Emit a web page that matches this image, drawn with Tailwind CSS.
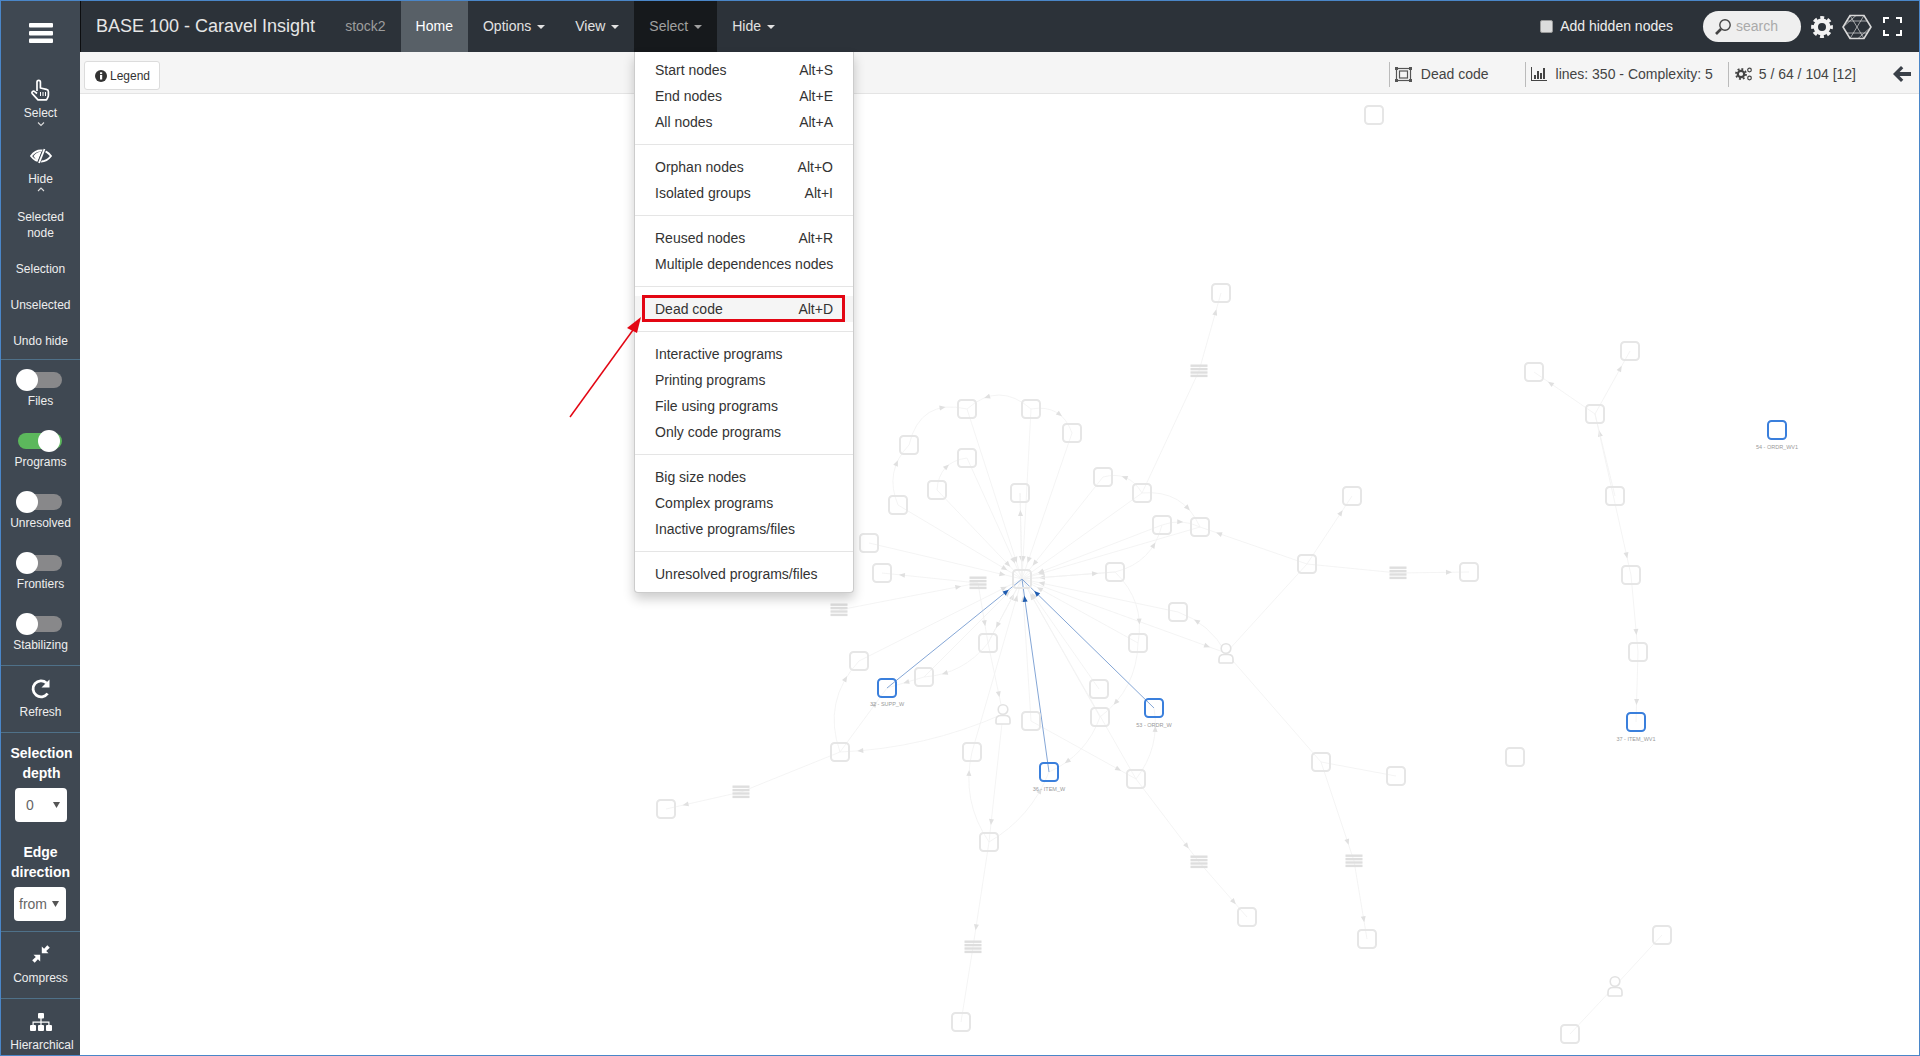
<!DOCTYPE html>
<html>
<head>
<meta charset="utf-8" />
<title>BASE 100 - Caravel Insight</title>
<script src="https://cdn.jsdelivr.net/npm/@tailwindcss/browser@4"></script>
</head>
<body class="relative w-[1920px] h-[1056px] overflow-hidden bg-white font-['Liberation_Sans',Arial,sans-serif] text-[14px] text-[#333]">
<div class="w-full h-full border border-[#4a86c8] flex">

  <!-- sidebar -->
  <div class="w-[79px] h-full shrink-0 bg-[#3f4852] text-[#eee] text-[12px] leading-[16px] text-center overflow-hidden">
    <div class="h-[64px] pt-[22px] flex justify-center">
      <svg width="24" height="20" viewBox="0 0 24 20" fill="#fff"><rect y="0" width="24" height="4.5" rx="1"/><rect y="8" width="24" height="4.5" rx="1"/><rect y="15.500" width="24" height="4.5" rx="1"/></svg>
    </div>
    <div class="mt-[14px] pl-[28px]">
      <svg width="22" height="22" viewBox="0 0 22 22" fill="none" stroke="#fff" stroke-width="1.700" stroke-linejoin="round"><path d="M8 12V3a1.700 1.700 0 0 1 3.400 0V9l6 1.300c1.300.3 2 1.100 2 2.400V16c0 1-.3 2-.8 2.800L17.500 20.800H9L3.300 14.600c-1.300-1.500.9-3.300 2.400-2L8 14.500"/><path d="M11.500 13v4M14 13v4M16.500 13v4" stroke-width="1"/></svg>
    </div>
    <div class="mt-[4px]">Select</div>
    <div class="h-[6px] flex justify-center"><svg width="8" height="6" viewBox="0 0 8 6" fill="none" stroke="#ddd" stroke-width="1.100"><path d="M1 1.500l3 3 3-3"/></svg></div>

    <div class="mt-[21px] flex justify-center">
      <svg width="22" height="16" viewBox="0 0 22 16"><path d="M1 8C4 4 7 2.500 11 2.500S18 4 21 8c-3 4-6 5.500-10 5.500S4 12 1 8z" fill="none" stroke="#fff" stroke-width="1.800"/><path d="M3.500 8C6 5 8 4 11.500 3.500L8 13C6 12 5 10 3.500 8z" fill="#fff"/><path d="M15 .5L8.500 15.500" stroke="#3f4852" stroke-width="3.400"/><path d="M14.500 1L9 15" stroke="#fff" stroke-width="1.800"/></svg>
    </div>
    <div class="mt-[7px]">Hide</div>
    <div class="h-[5px] flex justify-center"><svg width="8" height="5" viewBox="0 0 8 5" fill="none" stroke="#ddd" stroke-width="1.100"><path d="M1 4l3-3 3 3"/></svg></div>

    <div class="mt-[17px]">Selected<br>node</div>
    <div class="mt-[20px]">Selection</div>
    <div class="mt-[20px]">Unselected</div>
    <div class="mt-[20px]">Undo hide</div>
    <div class="mt-[10px] border-t border-[#4f7189]"></div>

    <div class="mt-[9px] pl-[15px]"><div class="relative w-[46px] h-[22px]"><div class="absolute left-[2px] right-0 top-[3px] h-[16px] rounded-full bg-[#88888a]"></div><div class="absolute left-0 top-0 w-[22px] h-[22px] rounded-full bg-white"></div></div></div>
    <div class="mt-[2px]">Files</div>
    <div class="mt-[21px] pl-[15px]"><div class="relative w-[46px] h-[22px]"><div class="absolute left-[2px] right-0 top-[3px] h-[16px] rounded-full bg-[#5cb85c]"></div><div class="absolute left-[22px] top-0 w-[22px] h-[22px] rounded-full bg-white"></div></div></div>
    <div class="mt-[2px]">Programs</div>
    <div class="mt-[21px] pl-[15px]"><div class="relative w-[46px] h-[22px]"><div class="absolute left-[2px] right-0 top-[3px] h-[16px] rounded-full bg-[#88888a]"></div><div class="absolute left-0 top-0 w-[22px] h-[22px] rounded-full bg-white"></div></div></div>
    <div class="mt-[2px]">Unresolved</div>
    <div class="mt-[21px] pl-[15px]"><div class="relative w-[46px] h-[22px]"><div class="absolute left-[2px] right-0 top-[3px] h-[16px] rounded-full bg-[#88888a]"></div><div class="absolute left-0 top-0 w-[22px] h-[22px] rounded-full bg-white"></div></div></div>
    <div class="mt-[2px]">Frontiers</div>
    <div class="mt-[21px] pl-[15px]"><div class="relative w-[46px] h-[22px]"><div class="absolute left-[2px] right-0 top-[3px] h-[16px] rounded-full bg-[#88888a]"></div><div class="absolute left-0 top-0 w-[22px] h-[22px] rounded-full bg-white"></div></div></div>
    <div class="mt-[2px]">Stabilizing</div>
    <div class="mt-[12px] border-t border-[#4f7189]"></div>

    <div class="mt-[12px] flex justify-center">
      <svg width="22" height="22" viewBox="0 0 22 22" fill="none"><path d="M17.600 15.500A8 8 0 1 1 16.500 5" stroke="#fff" stroke-width="2.800"/><path d="M19.500 1.500V9.500H11.500z" fill="#fff"/></svg>
    </div>
    <div class="mt-[4px]">Refresh</div>
    <div class="mt-[12px] border-t border-[#4f7189]"></div>

    <div class="mt-[10px] text-[14px] leading-[20px] font-bold text-white pl-[2px]">Selection<br>depth</div>
    <div class="mt-[5px] ml-[14px] w-[52px] h-[34px] rounded-[4px] bg-white flex items-center justify-between pl-[11px] pr-[7px] text-[14px] text-[#666]">0<svg width="7" height="6" viewBox="0 0 7 6" fill="#555"><path d="M0 0h7L3.500 6z"/></svg></div>
    <div class="mt-[20px] text-[14px] leading-[20px] font-bold text-white">Edge<br>direction</div>
    <div class="mt-[5px] ml-[13px] w-[52px] h-[34px] rounded-[4px] bg-white flex items-center justify-between pl-[5px] pr-[7px] text-[14px] text-[#666]">from<svg width="7" height="6" viewBox="0 0 7 6" fill="#555"><path d="M0 0h7L3.500 6z"/></svg></div>
    <div class="mt-[10px] border-t border-[#4f7189]"></div>

    <div class="mt-[13px] flex justify-center">
      <svg width="18" height="18" viewBox="0 0 18 18" fill="#fff"><path d="M9.800 8.200V1.500l2.300 2.300L15.300.2 17.800 2.700 14.200 5.900l2.300 2.300z"/><path d="M8.200 9.800v6.700l-2.300-2.300L2.700 17.800.2 15.300 3.800 12.100 1.500 9.800z"/></svg>
    </div>
    <div class="mt-[7px]">Compress</div>
    <div class="mt-[12px] border-t border-[#4f7189]"></div>

    <div class="mt-[14px] flex justify-center">
      <svg width="22" height="18" viewBox="0 0 22 18" fill="#fff"><rect x="8" y="0" width="6" height="5.500" rx="1"/><rect x="0" y="12" width="6" height="6" rx="1"/><rect x="8" y="12" width="6" height="6" rx="1"/><rect x="16" y="12" width="6" height="6" rx="1"/><path d="M10.400 5h1.200v3.500H19.500V12h-1.200V9.700h-6.700V12h-1.200V9.700H3.700V12H2.500V8.500h7.900z"/></svg>
    </div>
    <div class="mt-[6px] whitespace-nowrap pl-[3px]">Hierarchical</div>
  </div>

  <!-- main column -->
  <div class="flex-1 min-w-0 flex flex-col">
    <div class="h-[51px] shrink-0 bg-[#2c3239] border-l border-[#0c0d0f] flex items-stretch text-[#e2e2e2]">
      <div class="px-[15px] flex items-center text-[18px] text-[#e6e6e6]">BASE 100 - Caravel Insight</div>
      <div class="px-[15px] flex items-center text-[#9d9d9d]">stock2</div>
      <div class="px-[15px] flex items-center bg-[#586067] text-white">Home</div>
      <div class="px-[15px] flex items-center">Options<span class="ml-[6px] border-x-4 border-t-4 border-x-transparent border-t-current"></span></div>
      <div class="px-[15px] flex items-center">View<span class="ml-[6px] border-x-4 border-t-4 border-x-transparent border-t-current"></span></div>
      <div class="px-[15px] flex items-center bg-[#16191c] text-[#a0a0a0]">Select<span class="ml-[6px] border-x-4 border-t-4 border-x-transparent border-t-current"></span></div>
      <div class="px-[15px] flex items-center">Hide<span class="ml-[6px] border-x-4 border-t-4 border-x-transparent border-t-current"></span></div>

      <div class="ml-auto flex items-center">
        <div class="w-[13px] h-[13px] rounded-[2px] bg-[#dcdcdc] border border-[#999]"></div>
        <div class="ml-[7px] whitespace-nowrap text-[#eee]">Add hidden nodes</div>
        <div class="ml-[30px] w-[98px] h-[31px] rounded-full bg-[#efefef] flex items-center pl-[11px] text-[#aaa]">
          <svg width="18" height="18" viewBox="0 0 18 18" fill="none" stroke="#444"><circle cx="11" cy="7" r="5.200" stroke-width="1.400"/><path d="M7 11l-5 5" stroke-width="2.600"/></svg>
          <span class="ml-[4px]">search</span>
        </div>
        <svg class="ml-[9px]" width="24" height="24" viewBox="0 0 24 24" fill="none" stroke="#f2f2f2"><circle cx="12" cy="12" r="6.200" stroke-width="4.400"/><circle cx="12" cy="12" r="9.300" stroke-width="3.200" stroke-dasharray="3.900 3.400" stroke-dashoffset="2"/></svg>
        <svg class="ml-[8px]" width="30" height="26" viewBox="0 0 30 26" fill="none" stroke="#d8d8d8"><path d="M8 1.500h14L29 13l-7 11.500H8L1 13z" stroke-width="1.600"/><path d="M8 1.500L22 24.500M22 1.500L8 24.500M4 7h22M4 19h22M1 13l13-11.500M29 13L16 24.500" stroke-width=".7"/></svg>
        <svg class="ml-[11px] mr-[17px]" width="19" height="19" viewBox="0 0 19 19" fill="none" stroke="#fff" stroke-width="2"><path d="M1 6V1h5M13 1h5v5M18 13v5h-5M6 18H1v-5"/></svg>
      </div>
    </div>

    <div class="h-[42px] shrink-0 bg-[#f5f5f5] border-b border-b-[#e4e4e4] flex items-center">
      <div class="ml-[4px] w-[76px] h-[29px] mt-[6px] bg-white border border-[#dcdcdc] rounded-[3px] flex items-center pl-[10px] text-[12px]">
        <svg width="12" height="12" viewBox="0 0 12 12"><circle cx="6" cy="6" r="6" fill="#333"/><rect x="5" y="5" width="2.200" height="4.500" fill="#fff"/><rect x="5" y="2.300" width="2.200" height="1.800" fill="#fff"/></svg>
        <span class="ml-[3px] text-[#333]">Legend</span>
      </div>
      <div class="ml-auto flex items-center text-[#444] mt-[3px]">
        <div class="h-[25px] border-l border-[#bbb]"></div>
        <svg class="ml-[5px]" width="17" height="15" viewBox="0 0 17 15" fill="none" stroke="#555" stroke-width="1.200"><rect x="1.500" y="1.500" width="14" height="12"/><rect x="4.500" y="4" width="8" height="7"/><path d="M0 0h3v3H0zM14 0h3v3h-3zM0 12h3v3H0zM14 12h3v3h-3z" fill="#555" stroke="none"/></svg>
        <span class="ml-[9px]">Dead code</span>
        <div class="ml-[36px] h-[25px] border-l border-[#bbb]"></div>
        <svg class="ml-[5px]" width="16" height="14" viewBox="0 0 16 14" fill="#444"><path d="M0 13h16v1H0zM0 0h1v14H0z"/><rect x="3" y="8" width="2" height="4"/><rect x="6" y="4" width="2" height="8"/><rect x="9" y="6" width="2" height="6"/><rect x="12" y="1" width="2" height="11"/></svg>
        <span class="ml-[9px]">lines: 350 - Complexity: 5</span>
        <div class="ml-[15px] h-[25px] border-l border-[#bbb]"></div>
        <svg class="ml-[6px]" width="18" height="14" viewBox="0 0 18 14" fill="none" stroke="#444"><circle cx="6" cy="7" r="3.200" stroke-width="2.200"/><circle cx="6" cy="7" r="5" stroke-width="1.800" stroke-dasharray="1.900 2"/><circle cx="14.500" cy="3" r="1.800" stroke-width="1.200"/><circle cx="14.500" cy="11" r="1.800" stroke-width="1.200"/></svg>
        <span class="ml-[6px]">5 / 64 / 104 [12]</span>
        <svg class="ml-[37px] mr-[8px]" width="18" height="16" viewBox="0 0 18 16" fill="#3a4048"><path d="M8 0l2.300 2.300L6.600 6H18v4H6.600l3.700 3.700L8 16 0 8z"/></svg>
      </div>
    </div>

    <div class="flex-1 bg-white"></div>
  </div>
</div>

<!-- graph canvas -->
<svg id="graph" class="absolute left-0 top-0" width="1920" height="1056" viewBox="0 0 1920 1056"></svg>

<!-- select dropdown -->
<div class="absolute left-[634px] top-[52px] w-[220px] bg-white border border-[#ccc] border-t-0 rounded-b-[4px] shadow-[0_6px_12px_rgba(0,0,0,0.2)] py-[5px] text-[#333] leading-[20px]">
  <div class="h-[26px] px-[20px] flex items-center justify-between"><span>Start nodes</span><span>Alt+S</span></div>
  <div class="h-[26px] px-[20px] flex items-center justify-between"><span>End nodes</span><span>Alt+E</span></div>
  <div class="h-[26px] px-[20px] flex items-center justify-between"><span>All nodes</span><span>Alt+A</span></div>
  <div class="my-[9px] border-t border-[#e5e5e5]"></div>
  <div class="h-[26px] px-[20px] flex items-center justify-between"><span>Orphan nodes</span><span>Alt+O</span></div>
  <div class="h-[26px] px-[20px] flex items-center justify-between"><span>Isolated groups</span><span>Alt+I</span></div>
  <div class="my-[9px] border-t border-[#e5e5e5]"></div>
  <div class="h-[26px] px-[20px] flex items-center justify-between"><span>Reused nodes</span><span>Alt+R</span></div>
  <div class="h-[26px] px-[20px] flex items-center justify-between whitespace-nowrap"><span>Multiple dependences nodes</span></div>
  <div class="my-[9px] border-t border-[#e5e5e5]"></div>
  <div class="h-[26px] px-[20px] flex items-center justify-between bg-[#f5f5f5]"><span>Dead code</span><span>Alt+D</span></div>
  <div class="my-[9px] border-t border-[#e5e5e5]"></div>
  <div class="h-[26px] px-[20px] flex items-center justify-between"><span>Interactive programs</span></div>
  <div class="h-[26px] px-[20px] flex items-center justify-between"><span>Printing programs</span></div>
  <div class="h-[26px] px-[20px] flex items-center justify-between"><span>File using programs</span></div>
  <div class="h-[26px] px-[20px] flex items-center justify-between"><span>Only code programs</span></div>
  <div class="my-[9px] border-t border-[#e5e5e5]"></div>
  <div class="h-[26px] px-[20px] flex items-center justify-between"><span>Big size nodes</span></div>
  <div class="h-[26px] px-[20px] flex items-center justify-between"><span>Complex programs</span></div>
  <div class="h-[26px] px-[20px] flex items-center justify-between"><span>Inactive programs/files</span></div>
  <div class="my-[9px] border-t border-[#e5e5e5]"></div>
  <div class="h-[26px] px-[20px] flex items-center justify-between"><span>Unresolved programs/files</span></div>
</div>

<!-- red annotation over the menu -->
<div class="absolute left-[642px] top-[295px] w-[203px] h-[27px] border-[3px] border-[#e30613]"></div>
<svg class="absolute left-[560px] top-[310px]" width="90" height="112" viewBox="0 0 90 112"><path d="M10 107L73 20" stroke="#e30613" stroke-width="1.500"/><path d="M81 7L77 23 67 18z" fill="#e30613"/></svg>

<script>
// node positions, read off the reference
const N = {
  a:[967,409], b:[1031,409], c:[1072,433], d:[909,445], e:[967,458], f:[937,490], g:[1020,493], h:[1103,477],
  i:[1142,493], j:[898,505], k:[1162,525], l:[1200,527], m:[869,543], n:[882,573], C:[1022,579], o:[1115,572],
  p:[1178,612], q:[1138,643], r:[988,643], s:[859,661], t:[924,677], B1:[887,688], u:[1099,689], B2:[1154,708],
  B3:[1049,772], v:[1031,721], w:[1100,717], x:[840,752], y:[972,752], z:[1136,779], aa:[989,842],
  top:[1374,115], up:[1221,293], f1:[1352,496], hub:[1307,564], f2:[1469,572], far:[666,809], g1:[1396,776],
  g2:[1515,757], g3:[1247,917], g4:[1367,939], hub2:[1321,762], low:[961,1022], tr:[1662,935], bl:[1570,1034],
  c1:[1630,351], c2:[1534,372], c3:[1595,414], c4:[1615,496], c5:[1631,575], c6:[1638,652],
  B4:[1636,722], B5:[1777,430]
};
const L = { L1:[978,583], L2:[839,610], L3:[1199,371], L4:[1398,573], L5:[741,792], L6:[1354,861], L7:[1199,862], L8:[973,947] };
const P = { P1:[1226,653], P2:[1003,714], P3:[1615,986] };
const pos = Object.assign({}, N, L, P);

const blue = [['B1','C'],['B2','C'],['B3','C']];
// from, to, bow of the curve, arrow at the end or not
const edges = [
  ['a','C'],['b','C'],['c','C'],['e','C'],['f','C'],['g','C'],['h','C'],['j','C'],['k','C'],['l','C'],['m','C'],
  ['o','C'],['q','C'],['r','C'],['s','C'],['t','C'],['u','C'],['v','C'],['w','C'],['y','C'],['z','C'],['p','C'],['i','C',0,0],
  ['C','g'],['C','o'],['C','P1'],['C','r'],
  ['d','a',-17],['b','a',14],['b','c',-10],['j','d',-10],['f','e',-9],['i','h',8],['i','l',-12],['o','k',10],['k','l',-4],
  ['L1','n'],['L2','L1'],['L1','r'],['i','L3',0,0],['L3','up'],
  ['r','t',-8],['P2','x',-8],['x','s',-14],['x','B1'],['t','B1'],['r','P2'],['P2','aa'],['aa','y',-10],['aa','B3',8],['w','B3',-8],
  ['q','w',-10],['z','B2',8],['v','z'],['z','L7'],['L7','g3'],['aa','L8'],['L8','low',0,0],['x','L5',0,0],['L5','far'],
  ['o','q',-10],['P1','p',6],['hub','P1',0,0],['hub','f1'],['hub','L4',0,0],['L4','f2'],['hub','l'],['P1','hub2',0,0],['hub2','L6'],['hub2','g1',0,0],['L6','g4'],
  ['c3','c1'],['c3','c2'],['c4','c3'],['c3','c5'],['c5','c6'],['c6','B4'],['bl','P3',0,0],['P3','tr',0,0]
];
const svg = document.getElementById('graph');
let out = '';

function edge(e, stroke, arrow, width) {
  const A = pos[e[0]], B = pos[e[1]], bow = e[2] || 0;
  const dx = B[0]-A[0], dy = B[1]-A[1], len = Math.hypot(dx,dy);
  const cx = (A[0]+B[0])/2 - dy/len*bow*2, cy = (A[1]+B[1])/2 + dx/len*bow*2;
  out += `<path d="M${A[0]} ${A[1]}Q${cx} ${cy} ${B[0]} ${B[1]}" fill="none" stroke="${stroke}" stroke-width="${width}"/>`;
  if (e[3] === 0) return;
  const t = 1 - 20/len;
  const x = (1-t)*(1-t)*A[0]+2*t*(1-t)*cx+t*t*B[0], y = (1-t)*(1-t)*A[1]+2*t*(1-t)*cy+t*t*B[1];
  const ang = Math.atan2(2*(1-t)*(cy-A[1])+2*t*(B[1]-cy), 2*(1-t)*(cx-A[0])+2*t*(B[0]-cx))*180/Math.PI;
  out += `<path transform="translate(${x} ${y}) rotate(${ang})" d="M3 0L-3 -2.500L-3 2.500z" fill="${arrow}"/>`;
}
edges.forEach(e => edge(e, '#f1f1f1', '#e0e0e0', 0.8));
blue.forEach(e => edge(e, '#84a6d6', '#1f5cb0', 1));

Object.keys(N).forEach(k => {
  const p = N[k], isBlue = /^B\d/.test(k);
  out += `<rect x="${p[0]-9}" y="${p[1]-9}" width="18" height="18" rx="3.500" fill="none" stroke="${isBlue ? '#3a7fdc' : '#e6e6e6'}" stroke-width="2"/>`;
});
Object.keys(L).forEach(k => {
  const p = L[k];
  for (let i = 0; i < 4; i++) out += `<rect x="${p[0]-8.5}" y="${p[1]-6.5+i*3.4}" width="17" height="2.400" fill="#dedede"/>`;
});
Object.keys(P).forEach(k => {
  const p = P[k];
  out += `<g transform="translate(${p[0]} ${p[1]})" fill="#fff" stroke="#e2e2e2" stroke-width="1.600"><path d="M-7 9v-3c0-3 2-4.500 5-4.500h4c3 0 5 1.500 5 4.500v3c0 .7-.5 1-1 1H-6c-.5 0-1-.3-1-1z"/><circle cx="0" cy="-4.500" r="4.800"/></g>`;
});
[['32 - SUPP_W',887,706],['53 - ORDR_W',1154,727],['36 - ITEM_W',1049,791],['54 - ORDR_WV1',1777,449],['37 - ITEM_WV1',1636,741]].forEach(t => {
  out += `<text x="${t[1]}" y="${t[2]}" text-anchor="middle" font-size="5.500" fill="#999" font-family="Liberation Sans, sans-serif">${t[0]}</text>`;
});
svg.innerHTML = out;
</script>
</body>
</html>
